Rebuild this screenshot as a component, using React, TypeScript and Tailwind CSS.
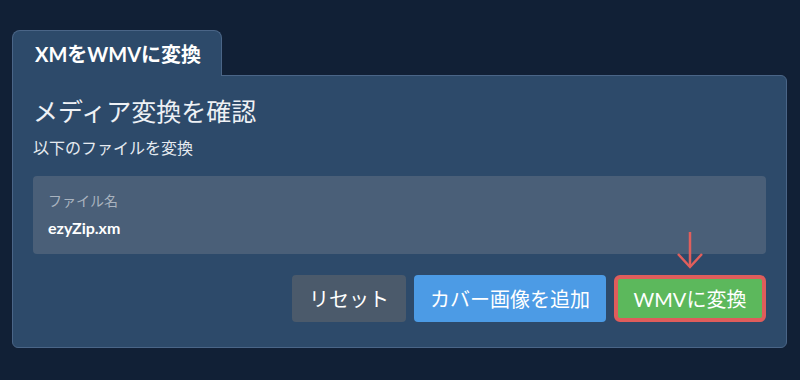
import React from 'react';

const font = { fontFamily: 'Lato, "Noto Sans CJK JP", sans-serif' };

export default function App() {
    return (
        <div className="min-h-screen w-full bg-[#112036] pt-[30px] px-3" style={font}>
            {/* tab */}
            <div className="relative z-10 -mb-px flex h-[46px] w-[210px] items-center rounded-t-lg border border-b-0 border-[#4a6587] bg-[#2d4a6a] pl-[22px] text-[20px] font-bold text-white">
                XMをWMVに変換
            </div>

            <div className="w-[775px] rounded-b-md rounded-tr-md border border-[#4a6587] bg-[#2d4a6a] px-[20px] pt-[19px] pb-[25px]">
                <h2 className="text-[25px] leading-8 text-[#eef1f5]">メディア変換を確認</h2>
                <p className="mt-[9px] text-[16px] leading-6 text-[#e6eaf0]">以下のファイルを変換</p>

                <div className="mt-[16px] rounded bg-[#4a5f78] px-[15px] pt-[15px] pb-[14px]">
                    <div className="text-[14px] leading-5 text-[#a9b3bf]">ファイル名</div>
                    <div className="mt-[5px] text-[16px] font-bold leading-6 text-white">ezyZip.xm</div>
                </div>

                <div className="mt-[21px] flex justify-end gap-2">
                    <button className="h-[47px] w-[114px] rounded bg-[#4b5a6b] text-[20px] text-white">リセット</button>
                    <button className="h-[47px] w-[192px] rounded bg-[#4c9be5] text-[20px] text-white">カバー画像を追加</button>
                    <div className="relative">
                        <svg
                            className="absolute bottom-full left-1/2 -translate-x-1/2 mb-[6px]"
                            width="30"
                            height="38"
                            viewBox="0 0 30 38"
                            fill="none"
                            stroke="#e05f5c"
                            strokeWidth="2.5"
                        >
                            <path d="M15 1 V36" />
                            <path d="M3 23 L15 36 L27 23" />
                        </svg>
                        <button className="h-[47px] w-[152px] rounded-md border-4 border-[#df5d5b] bg-[#5cb85c] text-[20px] text-white">
                            WMVに変換
                        </button>
                    </div>
                </div>
            </div>
        </div>
    );
}
